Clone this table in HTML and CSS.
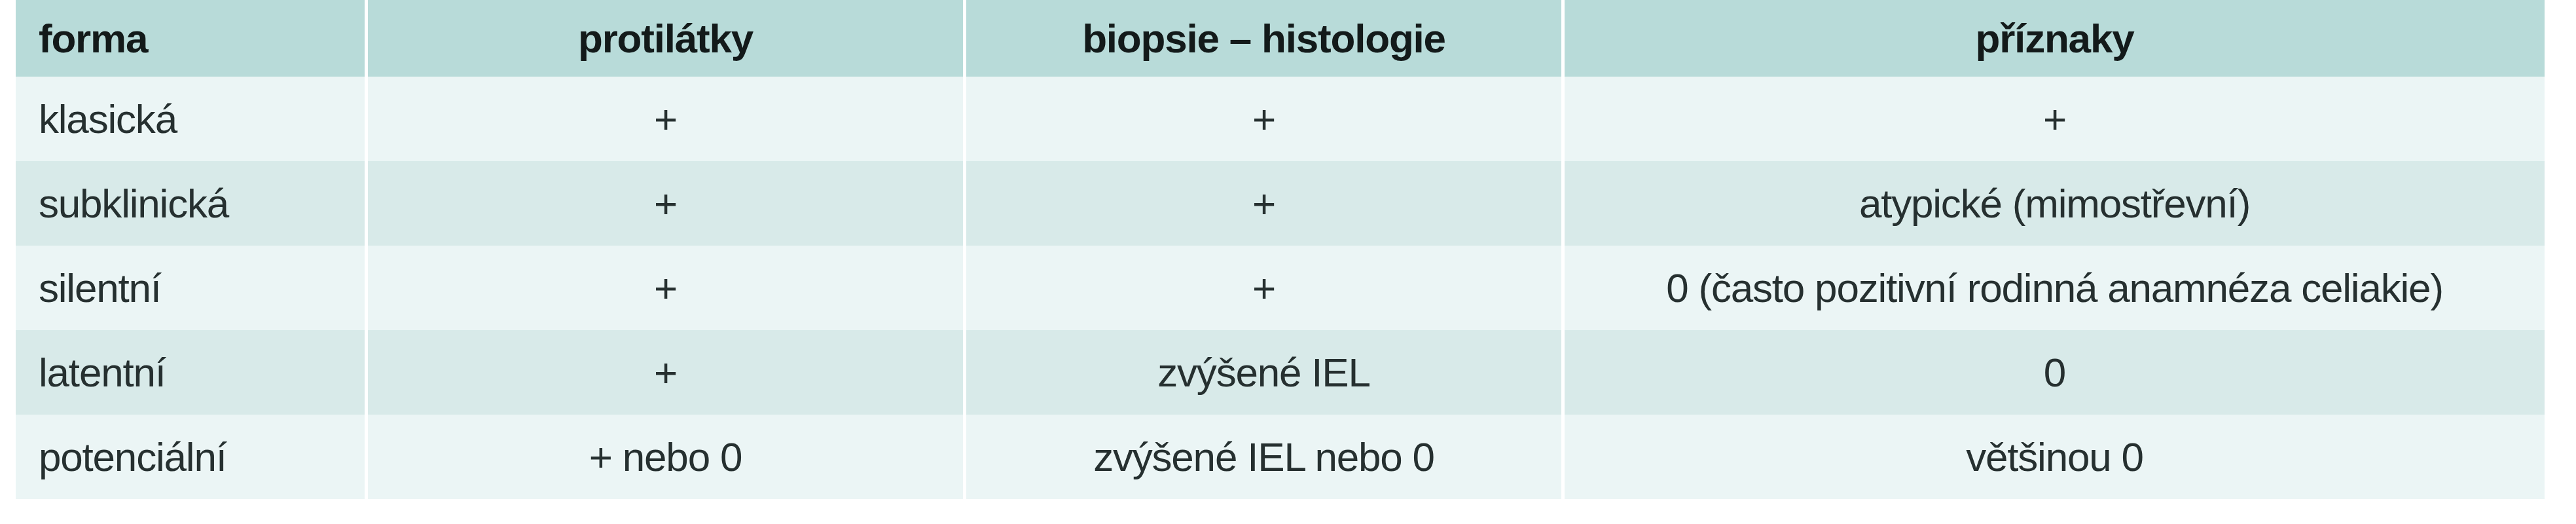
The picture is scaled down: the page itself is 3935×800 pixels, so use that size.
FILE: index.html
```html
<!DOCTYPE html>
<html lang="cs">
<head>
<meta charset="utf-8">
<title>Formy celiakie</title>
<link rel="stylesheet" href="styles.css">
</head>
<body>
<div class="table">
  <div class="row head">
    <div class="cell first">forma</div>
    <div class="cell">protilátky</div>
    <div class="cell">biopsie – histologie</div>
    <div class="cell">příznaky</div>
  </div>
  <div class="row light">
    <div class="cell first">klasická</div>
    <div class="cell">+</div>
    <div class="cell">+</div>
    <div class="cell">+</div>
  </div>
  <div class="row dark">
    <div class="cell first">subklinická</div>
    <div class="cell">+</div>
    <div class="cell">+</div>
    <div class="cell">atypické (mimostřevní)</div>
  </div>
  <div class="row light">
    <div class="cell first">silentní</div>
    <div class="cell">+</div>
    <div class="cell">+</div>
    <div class="cell">0 (často pozitivní rodinná anamnéza celiakie)</div>
  </div>
  <div class="row dark">
    <div class="cell first">latentní</div>
    <div class="cell">+</div>
    <div class="cell">zvýšené IEL</div>
    <div class="cell">0</div>
  </div>
  <div class="row light">
    <div class="cell first">potenciální</div>
    <div class="cell">+ nebo 0</div>
    <div class="cell">zvýšené IEL nebo 0</div>
    <div class="cell">většinou 0</div>
  </div>
</div>
</body>
</html>
```

FILE: styles.css
```css
html, body {
  margin: 0;
  padding: 0;
  background: #ffffff;
}

body {
  font-family: "Liberation Sans", Arial, sans-serif;
  font-size: 62px;
  color: #263030;
}

.table {
  margin-left: 24px;
  width: 3863px;
  display: flex;
  flex-direction: column;
}

.row {
  display: grid;
  grid-template-columns: 533px 909px 909px 1497px;
  column-gap: 5px;
  height: 129px;
}

.row.head {
  height: 117px;
  font-weight: 700;
  color: #131a1a;
}

.cell {
  display: flex;
  align-items: center;
  justify-content: center;
  white-space: nowrap;
  letter-spacing: -1.2px;
}

.cell.first {
  justify-content: flex-start;
  padding-left: 35px;
}

.head .cell {
  background: #b8dbd9;
}

.light .cell {
  background: #ebf5f5;
}

.dark .cell {
  background: #d8eae9;
}
```
